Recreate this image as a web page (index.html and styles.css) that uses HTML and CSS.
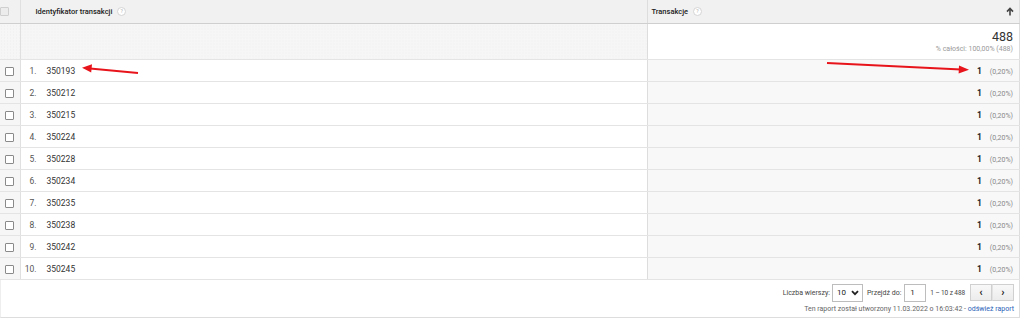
FILE: index.html
```html
<!DOCTYPE html>
<html lang="pl">

<head>
    <meta charset="UTF-8">
    <meta name="viewport" content="width=device-width, initial-scale=1.0">
    <title>Identyfikator transakcji</title>
    <link rel="stylesheet" href="styles.css">
</head>

<body>
    <div class="report">
        <table class="grid">
            <colgroup>
                <col class="col-check">
                <col class="col-dim">
                <col class="col-metric">
            </colgroup>
            <thead>
                <tr class="head-row">
                    <th class="check-cell"><span class="box box-head"></span></th>
                    <th class="dim-head">Identyfikator transakcji <span class="help">?</span></th>
                    <th class="metric-head">
                        <div class="metric-head-in">
                            <span>Transakcje <span class="help">?</span></span>
                            <svg class="sort" width="8" height="9" viewBox="0 0 8 9"><path d="M4 8.5 V1.8 M1 4.6 L4 1.4 L7 4.6" fill="none" stroke="#444" stroke-width="1.6"/></svg>
                        </div>
                    </th>
                </tr>
                <tr class="total-row">
                    <td class="check-cell total-check"></td>
                    <td class="total-dim"></td>
                    <td class="total-metric">
                        <div class="total-value">488</div>
                        <div class="total-share">% całości: 100,00% (488)</div>
                    </td>
                </tr>
            </thead>
            <tbody>
                <tr><td class="check-cell"><span class="box"></span></td><td><span class="idx">1.</span><span class="key">350193</span></td><td class="val"><b>1</b><span class="pct">(0,20%)</span></td></tr>
                <tr><td class="check-cell"><span class="box"></span></td><td><span class="idx">2.</span><span class="key">350212</span></td><td class="val"><b>1</b><span class="pct">(0,20%)</span></td></tr>
                <tr><td class="check-cell"><span class="box"></span></td><td><span class="idx">3.</span><span class="key">350215</span></td><td class="val"><b>1</b><span class="pct">(0,20%)</span></td></tr>
                <tr><td class="check-cell"><span class="box"></span></td><td><span class="idx">4.</span><span class="key">350224</span></td><td class="val"><b>1</b><span class="pct">(0,20%)</span></td></tr>
                <tr><td class="check-cell"><span class="box"></span></td><td><span class="idx">5.</span><span class="key">350228</span></td><td class="val"><b>1</b><span class="pct">(0,20%)</span></td></tr>
                <tr><td class="check-cell"><span class="box"></span></td><td><span class="idx">6.</span><span class="key">350234</span></td><td class="val"><b>1</b><span class="pct">(0,20%)</span></td></tr>
                <tr><td class="check-cell"><span class="box"></span></td><td><span class="idx">7.</span><span class="key">350235</span></td><td class="val"><b>1</b><span class="pct">(0,20%)</span></td></tr>
                <tr><td class="check-cell"><span class="box"></span></td><td><span class="idx">8.</span><span class="key">350238</span></td><td class="val"><b>1</b><span class="pct">(0,20%)</span></td></tr>
                <tr><td class="check-cell"><span class="box"></span></td><td><span class="idx">9.</span><span class="key">350242</span></td><td class="val"><b>1</b><span class="pct">(0,20%)</span></td></tr>
                <tr><td class="check-cell"><span class="box"></span></td><td><span class="idx">10.</span><span class="key">350245</span></td><td class="val"><b>1</b><span class="pct">(0,20%)</span></td></tr>
            </tbody>
        </table>

        <div class="footer">
            <div class="pager">
                <span>Liczba wierszy:</span>
                <span class="select">10
                    <svg width="8" height="6" viewBox="0 0 8 6"><path d="M1 1.2 L4 4.2 L7 1.2" fill="none" stroke="#222" stroke-width="1.8"/></svg>
                </span>
                <span class="after-select">Przejdź do:</span>
                <span class="goto">1</span>
                <span class="range">1 – 10 z 488</span>
                <span class="nav">
                    <span class="btn">&#8249;</span><span class="btn">&#8250;</span>
                </span>
            </div>
            <div class="stamp">Ten raport został utworzony 11.03.2022 o 16:03:42 - <a href="#">odśwież raport</a></div>
        </div>

        <!-- strzałki narysowane na zrzucie -->
        <svg class="arrows" width="1024" height="322" viewBox="0 0 1024 322">
            <line x1="138" y1="73" x2="90" y2="68.5" stroke="#e8141b" stroke-width="2"/>
            <polygon points="82,67.8 92,64.2 91.2,72.4" fill="#e8141b"/>
            <line x1="827" y1="63" x2="961" y2="69.4" stroke="#e8141b" stroke-width="2"/>
            <polygon points="969,69.8 959,65.4 958.6,73.6" fill="#e8141b"/>
        </svg>
    </div>
</body>

</html>
```

FILE: styles.css
```css
body {
    margin: 0;
    font-family: Roboto, "Liberation Sans", sans-serif;
    color: #333;
    background: #fff;
}

.report {
    position: relative;
    width: 1020px;
}

.grid {
    width: 1020px;
    border-collapse: collapse;
    table-layout: fixed;
    font-size: 8.5px;
    border-right: 1px solid #ddd;
}

.col-check {
    width: 20px;
}
.col-dim {
    width: 627px;
}

.grid td,
.grid th {
    padding: 0;
    border-bottom: 1px solid #e4e4e4;
    vertical-align: middle;
}

/* nagłówek */
.head-row th {
    height: 23px;
    background: #f1f1f1;
    border-bottom: 1px solid #cfcfcf;
    text-align: left;
    font-size: 7.5px;
    font-weight: 500;
    color: #222;
}
.dim-head {
    padding-left: 15px !important;
}
.metric-head {
    border-left: 1px solid #ddd;
}
.metric-head-in {
    display: flex;
    justify-content: space-between;
    align-items: center;
    padding: 0 5px 0 4px;
}
.help {
    display: inline-block;
    width: 7px;
    height: 7px;
    line-height: 7px;
    margin-left: 3px;
    border: 1px solid #d4d4d4;
    border-radius: 50%;
    background: #fff;
    color: #bbb;
    font-size: 5px;
    text-align: center;
    vertical-align: middle;
}

.check-cell {
    background: #f6f6f6;
    border-right: 1px solid #e0e0e0;
    text-align: center;
}
.box {
    display: inline-block;
    width: 7px;
    height: 7px;
    border: 1px solid #8a8a8a;
    border-radius: 1px;
    background: #fff;
    vertical-align: middle;
}
.box-head {
    border-color: #cfcfcf;
    background: #ececec;
}

/* wiersz sumy */
.total-row td {
    height: 35px;
}
.total-dim,
.total-check {
    background-color: #f6f6f6;
    background-image: radial-gradient(#eeeeee 0.6px, transparent 0.7px);
    background-size: 3px 3px;
}
.total-metric {
    border-left: 1px solid #ddd;
    text-align: right;
    padding-right: 6px !important;
}
.total-value {
    font-size: 12.5px;
    color: #333;
    line-height: 14px;
}
.total-share {
    font-size: 7px;
    color: #999;
    margin-top: 1px;
}

/* wiersze danych */
tbody td {
    height: 21px;
}
.idx {
    display: inline-block;
    width: 16px;
    text-align: right;
    color: #555;
}
.key {
    margin-left: 10px;
}
.val {
    background: #f8f8f8;
    border-left: 1px solid #ddd;
    text-align: right;
    padding-right: 6px !important;
}
.val b {
    color: #222;
    font-weight: 700;
}
.pct {
    display: inline-block;
    margin-left: 8px;
    font-size: 7px;
    color: #888;
}

/* stopka */
.footer {
    height: 38px;
    border-bottom: 1px solid #ddd;
    border-left: 1px solid #eee;
    border-right: 1px solid #ddd;
    display: flex;
    flex-direction: column;
    align-items: flex-end;
    padding: 3px 5px 0 0;
    box-sizing: border-box;
    font-size: 7px;
    color: #444;
}
.pager {
    display: flex;
    align-items: center;
    gap: 2px;
    height: 19px;
}
.select {
    display: inline-flex;
    align-items: center;
    justify-content: space-between;
    box-sizing: border-box;
    width: 31px;
    height: 18px;
    padding: 0 3px 0 4px;
    border: 1px solid #bdbdbd;
    background: #fff;
    color: #222;
    font-size: 8px;
}
.after-select {
    margin-left: 2px;
}
.goto {
    display: inline-flex;
    align-items: center;
    box-sizing: border-box;
    width: 22px;
    height: 18px;
    margin-left: 1px;
    padding-left: 5px;
    border: 1px solid #bdbdbd;
    background: #fff;
    color: #222;
    font-size: 8px;
}
.range {
    margin: 0 3px 0 2px;
    font-size: 6.5px;
    letter-spacing: -0.1px;
}
.nav {
    display: inline-flex;
}
.btn {
    display: inline-flex;
    align-items: center;
    justify-content: center;
    box-sizing: border-box;
    width: 22px;
    height: 17px;
    border: 1px solid #d0d0d0;
    background: linear-gradient(#f8f8f8, #ececec);
    font-size: 11px;
    font-weight: 700;
    color: #222;
}
.btn + .btn {
    border-left: 1px solid #e2e2e2;
}
.stamp {
    margin-top: 3px;
    font-size: 7px;
    color: #666;
}
.stamp a {
    color: #2a62b8;
    text-decoration: none;
}

.arrows {
    position: absolute;
    top: 0;
    left: 0;
    pointer-events: none;
}
```
